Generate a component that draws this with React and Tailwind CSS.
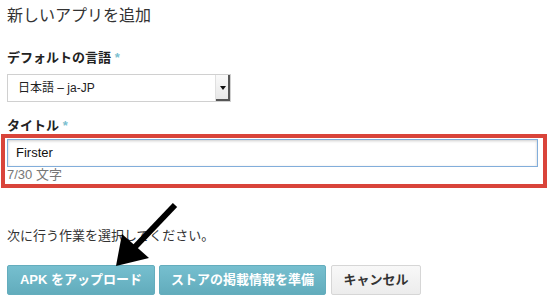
import React from "react";

function Arrow() {
  return (
    <svg
      className="pointer-events-none absolute left-0 top-0"
      width="551"
      height="305"
      viewBox="0 0 551 305"
    >
      <line x1="175" y1="205" x2="134" y2="248" stroke="#000" strokeWidth="6" />
      <polygon points="116,266 122,234 149,258" fill="#000" />
    </svg>
  );
}

export default function App() {
  return (
    <div
      className="relative h-[305px] w-[551px] overflow-hidden bg-white text-[#333]"
      style={{ fontFamily: '"Liberation Sans", "Noto Sans CJK JP", sans-serif' }}
    >
      <div className="flex flex-col pt-[6px]">
        <h1 className="px-[7px] text-[16px] leading-[20px] text-[#333]">新しいアプリを追加</h1>

        <label className="mt-[24px] px-[7px] text-[13px] font-bold leading-[16px] text-[#222]">
          デフォルトの言語 <span className="text-[#7bbfd0]">*</span>
        </label>

        <div className="mx-[7px] mt-[8px] flex h-[28px] w-[224px] items-stretch border border-[#d0d0d0] bg-white">
          <div className="flex flex-1 items-center pl-[10px] text-[12px] text-[#222]">
            日本語 – ja-JP
          </div>
          <div className="flex w-[15px] items-center justify-center border-l border-[#e0e0e0] bg-gradient-to-b from-[#fafafa] to-[#e6e6e6] shadow-[inset_-2px_-2px_0_#555]">
            <div className="h-0 w-0 border-x-[3px] border-t-[4px] border-x-transparent border-t-[#111]" />
          </div>
        </div>

        <label className="mt-[16px] px-[7px] text-[13px] font-bold leading-[16px] text-[#222]">
          タイトル <span className="text-[#7bbfd0]">*</span>
        </label>

        <div className="ml-[1px] w-[546px] border-[4px] border-[#d9443a] pb-[2px] pl-[2px] pr-[5px] pt-[1px]">
          <div className="flex h-[28px] items-center border border-[#82aedb] bg-white pl-[8px] text-[13px] text-[#111] shadow-[inset_0_1px_3px_rgba(0,0,0,0.2)]">
            Firster
          </div>
          <div className="mt-[1px] text-[13px] leading-[14px] text-[#777]">7/30 文字</div>
        </div>

        <p className="mt-[40px] px-[7px] text-[13px] leading-[16px] text-[#333]">
          次に行う作業を選択してください。
        </p>

        <div className="mt-[21px] flex gap-[4px] px-[7px]">
          <button className="h-[30px] w-[148px] rounded-[2px] border border-[#64adbd] bg-gradient-to-b from-[#76bfcf] to-[#62acbc] text-[13px] font-bold text-white">
            APK をアップロード
          </button>
          <button className="h-[30px] w-[167px] rounded-[2px] border border-[#64adbd] bg-gradient-to-b from-[#76bfcf] to-[#62acbc] text-[13px] font-bold text-white">
            ストアの掲載情報を準備
          </button>
          <button className="ml-[1px] h-[30px] w-[90px] rounded-[2px] border border-[#d6d6d6] bg-gradient-to-b from-[#f8f8f8] to-[#ececec] text-[13px] font-bold text-[#333]">
            キャンセル
          </button>
        </div>
      </div>
      <Arrow />
    </div>
  );
}
